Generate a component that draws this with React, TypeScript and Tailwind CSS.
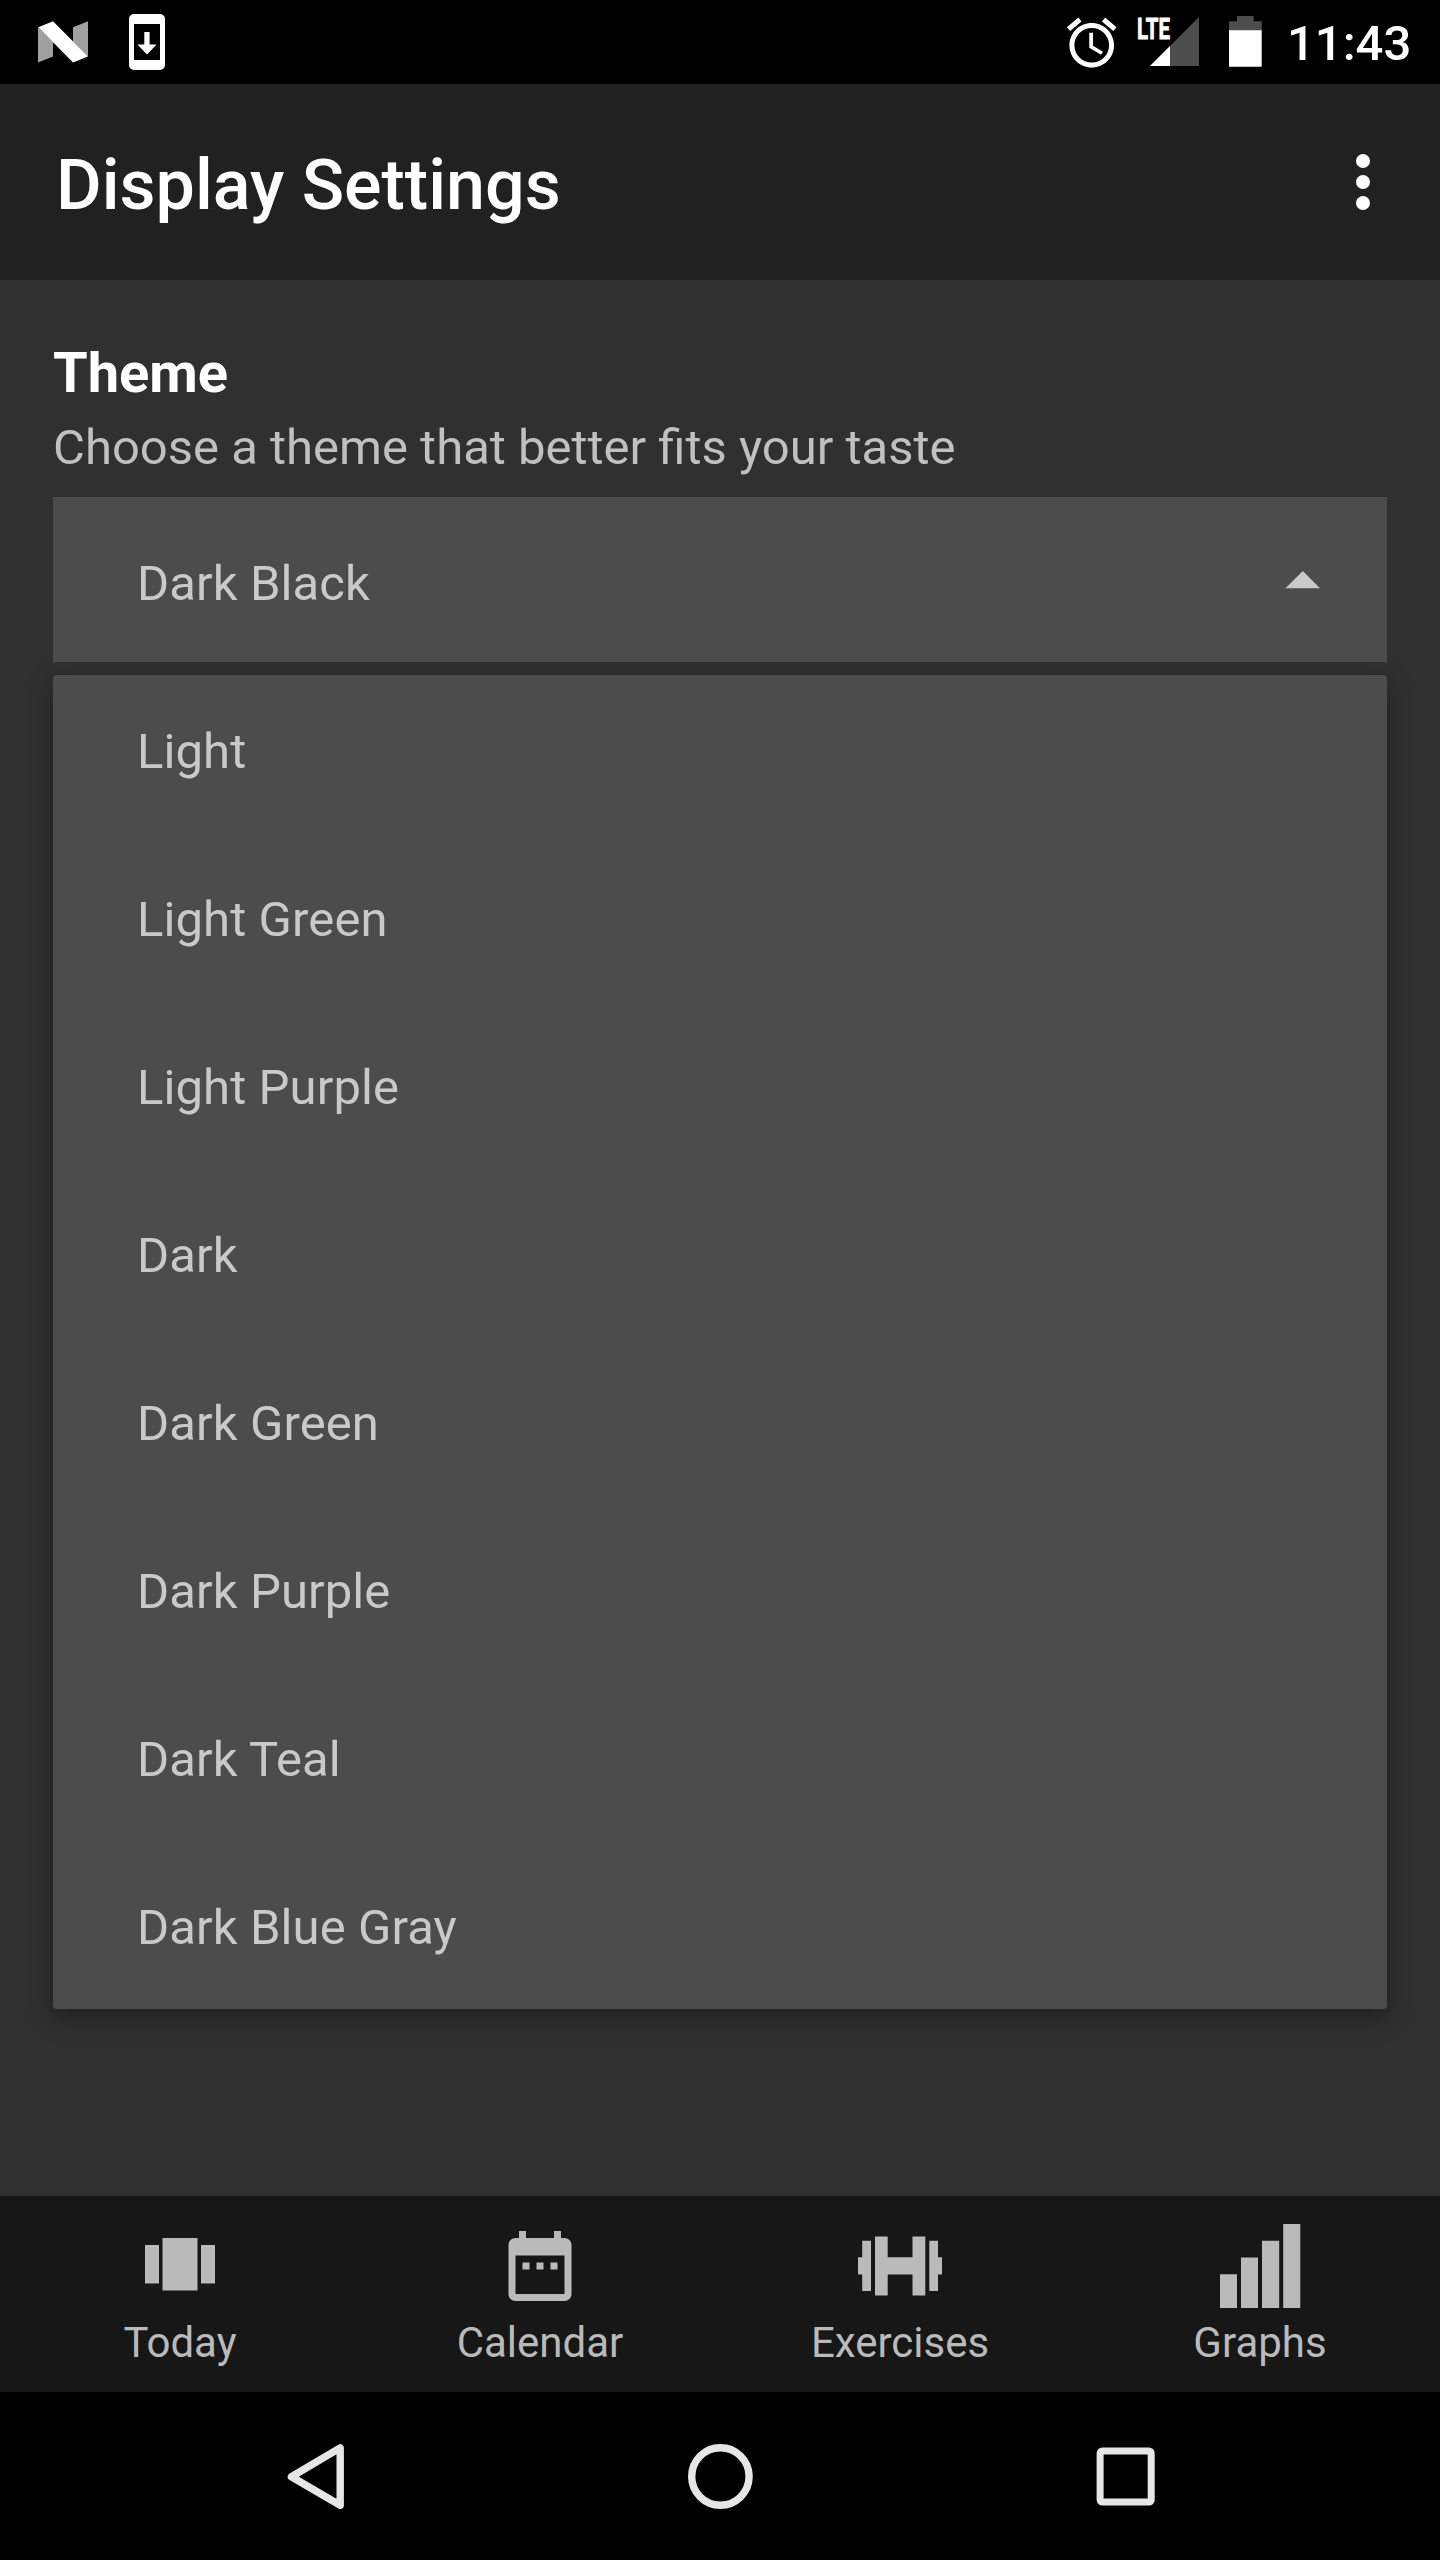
import React from "react";

const themes = [
  "Light",
  "Light Green",
  "Light Purple",
  "Dark",
  "Dark Green",
  "Dark Purple",
  "Dark Teal",
  "Dark Blue Gray",
];

function StatusBar() {
  return (
    <div className="flex h-[84px] shrink-0 items-start bg-black text-white">
      <svg className="ml-[38px] h-[84px] w-[50px]" viewBox="38 0 50 84">
        <path d="M38 27L53 42V56.5L38 62.5ZM73 27.3L88 21.3V56.5L73 41.5Z" fill="#a0a0a0" />
        <path d="M38.3 27.3L53 21.3L88 56.5L73 62.5Z" fill="#fff" />
      </svg>
      <svg className="ml-[41px] h-[84px] w-[36px]" viewBox="129 0 36 84">
        <path
          fill="#fff"
          fillRule="evenodd"
          d="M134 14H160A5 5 0 0 1 165 19V65A5 5 0 0 1 160 70H134A5 5 0 0 1 129 65V19A5 5 0 0 1 134 14ZM134 24V60H160V24ZM144.3 32H149.6V44.6H156.6L147 54.6L137.4 44.6H144.3Z"
        />
      </svg>
      <div className="flex-1" />
      <svg className="mt-[12.6px] size-[59.5px]" viewBox="0 0 24 24" fill="#fff">
        <path d="M22 5.72l-4.6-3.86-1.29 1.53 4.6 3.86L22 5.72zM7.88 3.39L6.6 1.86 2 5.71l1.29 1.53 4.59-3.85zM12.5 8H11v6l4.75 2.85.75-1.23-4-2.37V8zM12 4c-4.97 0-9 4.03-9 9s4.02 9 9 9c4.97 0 9-4.03 9-9s-4.03-9-9-9zm0 16c-3.87 0-7-3.13-7-7s3.13-7 7-7 7 3.13 7 7-3.13 7-7 7z" />
      </svg>
      <svg className="ml-[15px] h-[84px] w-[64px]" viewBox="1136 0 64 84">
        <path d="M1150 66L1199 17V66Z" fill="#4d4d4d" />
        <path d="M1150 66L1170 46V66Z" fill="#fff" />
        <text
          x="1137"
          y="39"
          fontSize="29"
          fontWeight="700"
          fill="#fff"
          stroke="#fff"
          strokeWidth="0.8"
          textLength="33"
          lengthAdjust="spacingAndGlyphs"
        >
          LTE
        </text>
      </svg>
      <svg className="ml-[29px] h-[84px] w-[33px]" viewBox="1229 0 33 84">
        <path d="M1237 16H1253.6V21.3H1261.7V31H1229V21.3H1237Z" fill="#4d4d4d" />
        <path d="M1229 30.3H1261.7V66.7H1229Z" fill="#fff" />
      </svg>
      <div className="mr-[28px] ml-[25px] w-[125px] pt-[2px] text-[49px] leading-[84px] font-medium">11:43</div>
    </div>
  );
}

function NavItem({ label, children }: { label: string; children: React.ReactNode }) {
  return (
    <div className="flex flex-1 flex-col items-center pt-[28px]">
      <svg className="size-[84px]" viewBox="0 0 84 84" fill="currentColor">
        {children}
      </svg>
      <div className="mt-[10px] text-[42px] leading-[49px]">{label}</div>
    </div>
  );
}

export default function App() {
  return (
    <div className="flex h-[2560px] w-[1440px] flex-col overflow-hidden bg-[#303030] font-[Roboto,sans-serif]">
      <StatusBar />

      <header className="flex h-[196px] shrink-0 items-center justify-between bg-[#212121] pr-[70px] pl-[56px]">
        <h1 className="pt-[6px] text-[70px] leading-[82px] font-medium text-white">Display Settings</h1>
        <svg className="h-[56px] w-[14px]" viewBox="0 0 14 56" fill="#fff">
          <circle cx="7" cy="7" r="7" />
          <circle cx="7" cy="28" r="7" />
          <circle cx="7" cy="49" r="7" />
        </svg>
      </header>

      <main className="flex-1 px-[53px] pt-[60px]">
        <h2 className="text-[56px] leading-[66px] font-bold text-white">Theme</h2>
        <p className="mt-[13px] text-[49px] leading-[58px] text-[#c0c0c0]">
          Choose a theme that better fits your taste
        </p>
        <div className="mt-[20px] flex h-[165px] items-center justify-between bg-[#4c4c4c] pr-[67px] pl-[84px] text-[#c9c9c9]">
          <span className="pt-[8px] text-[49px] leading-[58px] tracking-[0.1px]">Dark Black</span>
          <svg className="h-[20px] w-[35px]" viewBox="0 0 35 20" fill="currentColor">
            <path d="M0.5 18.3L17.8 1L35 18.3Z" />
          </svg>
        </div>
        <div className="mt-[13px] h-[1334px] overflow-hidden rounded-[4px] bg-[#4c4c4c] shadow-[0_8px_24px_rgba(0,0,0,0.36)]">
          <ul className="-mt-[7px]">
            {themes.map((theme) => (
              <li
                key={theme}
                className="h-[168px] pl-[84px] text-[49px] leading-[168px] tracking-[0.1px] text-[#c9c9c9]"
              >
                {theme}
              </li>
            ))}
          </ul>
        </div>
      </main>

      <nav className="flex h-[196px] shrink-0 bg-[#171717] text-[#bababa]">
        <NavItem label="Today">
          <path d="M24.5 14h35v52.5h-35zM7 21h14v38.5H7zM63 21h14v38.5H63z" />
        </NavItem>
        <NavItem label="Calendar">
          <path
            transform="scale(3.5)"
            d="M9 11H7v2h2v-2zm4 0h-2v2h2v-2zm4 0h-2v2h2v-2zm2-7h-1V2h-2v2H8V2H6v2H5c-1.11 0-1.99.9-1.99 2L3 20c0 1.1.89 2 2 2h14c1.1 0 2-.9 2-2V6c0-1.1-.9-2-2-2zm0 16H5V9h14v11z"
          />
        </NavItem>
        <NavItem label="Exercises">
          <path d="M0 33.3H4.2V16.7H13V67H4.2V50.5H0ZM17 12.6H29.7V33.3H54.5V12.6H67.3V71.6H54.5V50.5H29.7V71.6H17ZM71.3 16.7H80V33.3H84V50.5H80V67H71.3Z" />
        </NavItem>
        <NavItem label="Graphs">
          <path d="M2 50.3H19V84H2ZM23 33.4H40V84H23ZM44 16.7H61.2V84H44ZM65.2 0H82.3V84H65.2Z" />
        </NavItem>
      </nav>

      <footer className="flex h-[168px] shrink-0 items-center justify-center gap-[308px] bg-black">
        <svg className="size-[98px]" viewBox="0 0 98 98" fill="none" stroke="#e6e6e6" strokeWidth="7.4" strokeLinejoin="round">
          <path d="M26.4 49.8L75.2 20.9V78.3Z" />
        </svg>
        <svg className="size-[98px]" viewBox="0 0 98 98" fill="none" stroke="#e6e6e6" strokeWidth="7.4">
          <circle cx="49.4" cy="49.5" r="28.7" />
        </svg>
        <svg className="size-[98px]" viewBox="0 0 98 98" fill="none" stroke="#e6e6e6" strokeWidth="7">
          <rect x="23.1" y="23.9" width="51.1" height="51.2" rx="2.3" />
        </svg>
      </footer>
    </div>
  );
}
